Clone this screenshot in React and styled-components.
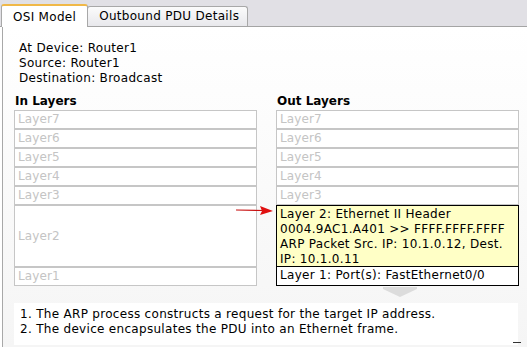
import React from "react";
import styled, { createGlobalStyle } from "styled-components";

const GlobalStyle = createGlobalStyle`
  html, body {
    margin: 0;
    padding: 0;
    background: #ffffff;
  }
  body {
    font-family: "DejaVu Sans", Verdana, sans-serif;
    font-size: 12px;
    letter-spacing: 0.3px;
    color: #000;
  }
`;

const inLayers = ["Layer7", "Layer6", "Layer5", "Layer4", "Layer3", "Layer2", "Layer1"];
const outLayers = ["Layer7", "Layer6", "Layer5", "Layer4", "Layer3"];

const App = () => {
  return (
    <>
      <GlobalStyle />
      <Window>
        <TabBar>
          <Tab active>OSI Model</Tab>
          <Tab>Outbound PDU Details</Tab>
        </TabBar>
        <Panel>
          <Info>
            <div>At Device: Router1</div>
            <div>Source: Router1</div>
            <div>Destination: Broadcast</div>
          </Info>
          <Columns>
            <Column>
              <Heading>In Layers</Heading>
              {inLayers.map((l) => (
                <LayerBox key={l} tall={l === "Layer2"}>
                  {l}
                </LayerBox>
              ))}
            </Column>
            <Column>
              <Heading>Out Layers</Heading>
              {outLayers.map((l) => (
                <LayerBox key={l}>{l}</LayerBox>
              ))}
              <ActiveBox tall highlight>
                Layer 2: Ethernet II Header
                <br />
                0004.9AC1.A401 &gt;&gt; FFFF.FFFF.FFFF
                <br />
                ARP Packet Src. IP: 10.1.0.12, Dest.
                <br />
                IP: 10.1.0.11
              </ActiveBox>
              <ActiveBox>Layer 1: Port(s): FastEthernet0/0</ActiveBox>
              <Chevron width="34" height="11" viewBox="0 0 34 11">
                <polygon points="0,0 34,0 34,2 17,10 0,2" fill="#dcdcdc" />
              </Chevron>
            </Column>
            <Arrow width="38" height="12" viewBox="0 0 38 12">
              <line x1="0" y1="5" x2="28" y2="5.5" stroke="#c81010" strokeWidth="1.2" />
              <polygon points="24,1 37,6 24,10 26,6" fill="#e01010" />
            </Arrow>
          </Columns>
          <Steps>
            <div>1. The ARP process constructs a request for the target IP address.</div>
            <div>2. The device encapsulates the PDU into an Ethernet frame.</div>
          </Steps>
          <CornerDash />
        </Panel>
      </Window>
    </>
  );
};

const Window = styled.div`
  width: 527px;
  height: 347px;
  overflow: hidden;
  display: flex;
  flex-direction: column;
  background: #ffffff;
`;

const TabBar = styled.div`
  height: 26px;
  flex: none;
  display: flex;
  align-items: flex-end;
  padding-left: 1px;
  background: #e1e0e5;
  border-bottom: 1px solid #a4a4a4;
`;

const Tab = styled.div`
  box-sizing: border-box;
  height: ${(p) => (p.active ? "23px" : "20px")};
  margin-bottom: ${(p) => (p.active ? "-1px" : "0")};
  padding: ${(p) => (p.active ? "3px 11px 0 11px" : "1px 8px 0 11px")};
  line-height: 16px;
  color: #000;
  border: 1px solid #a8a8a8;
  border-bottom: none;
  border-top: ${(p) => (p.active ? "2px solid #f0b848" : "1px solid #a8a8a8")};
  border-radius: 3px 3px 0 0;
  background: ${(p) =>
    p.active ? "#ffffff" : "linear-gradient(#fbfbfb, #e8e8ec)"};
  margin-left: ${(p) => (p.active ? "0" : "-1px")};
`;

const Panel = styled.div`
  position: relative;
  flex: 1;
  margin-left: 2px;
  border-left: 1px solid #a8a8a8;
  background: linear-gradient(#ffffff, #f5f5f5);
  display: flex;
  flex-direction: column;
  padding-left: 11px;
`;

const Info = styled.div`
  padding: 14px 0 0 5px;
  line-height: 15px;
`;

const Columns = styled.div`
  position: relative;
  margin-top: 8px;
  display: grid;
  grid-template-columns: 243px 243px;
  column-gap: 19px;
`;

const Column = styled.div`
  display: flex;
  flex-direction: column;
  align-items: stretch;
`;

const Heading = styled.div`
  font-weight: bold;
  letter-spacing: 0;
  line-height: 15px;
  height: 16px;
  padding-left: 1px;
`;

const LayerBox = styled.div`
  box-sizing: border-box;
  height: ${(p) => (p.tall ? "62px" : "19px")};
  border: 1px solid #c6c6c6;
  background: #ffffff;
  color: #c4c4c4;
  letter-spacing: 0.1px;
  line-height: 17px;
  padding-left: 3px;
  display: flex;
  align-items: center;
`;

const ActiveBox = styled.div`
  box-sizing: border-box;
  height: ${(p) => (p.tall ? "62px" : "19px")};
  border: 1px solid #000;
  border-top: ${(p) => (p.tall ? "1px solid #000" : "none")};
  background: ${(p) => (p.highlight ? "#ffffc6" : "#ffffff")};
  line-height: ${(p) => (p.tall ? "15px" : "17px")};
  padding: ${(p) => (p.tall ? "1px 3px 0" : "0 3px")};
  white-space: nowrap;
`;

const Chevron = styled.svg`
  display: block;
  margin: 1px 0 0 107px;
`;

const Arrow = styled.svg`
  position: absolute;
  left: 222px;
  top: 111px;
`;

const Steps = styled.div`
  margin-top: 5px;
  width: 504px;
  height: 42px;
  box-sizing: border-box;
  background: #ffffff;
  padding: 4px 0 0 6px;
  line-height: 15px;
`;

const CornerDash = styled.div`
  position: absolute;
  right: 6px;
  bottom: 4px;
  width: 8px;
  height: 1px;
  background: #333;
`;

export default App;
